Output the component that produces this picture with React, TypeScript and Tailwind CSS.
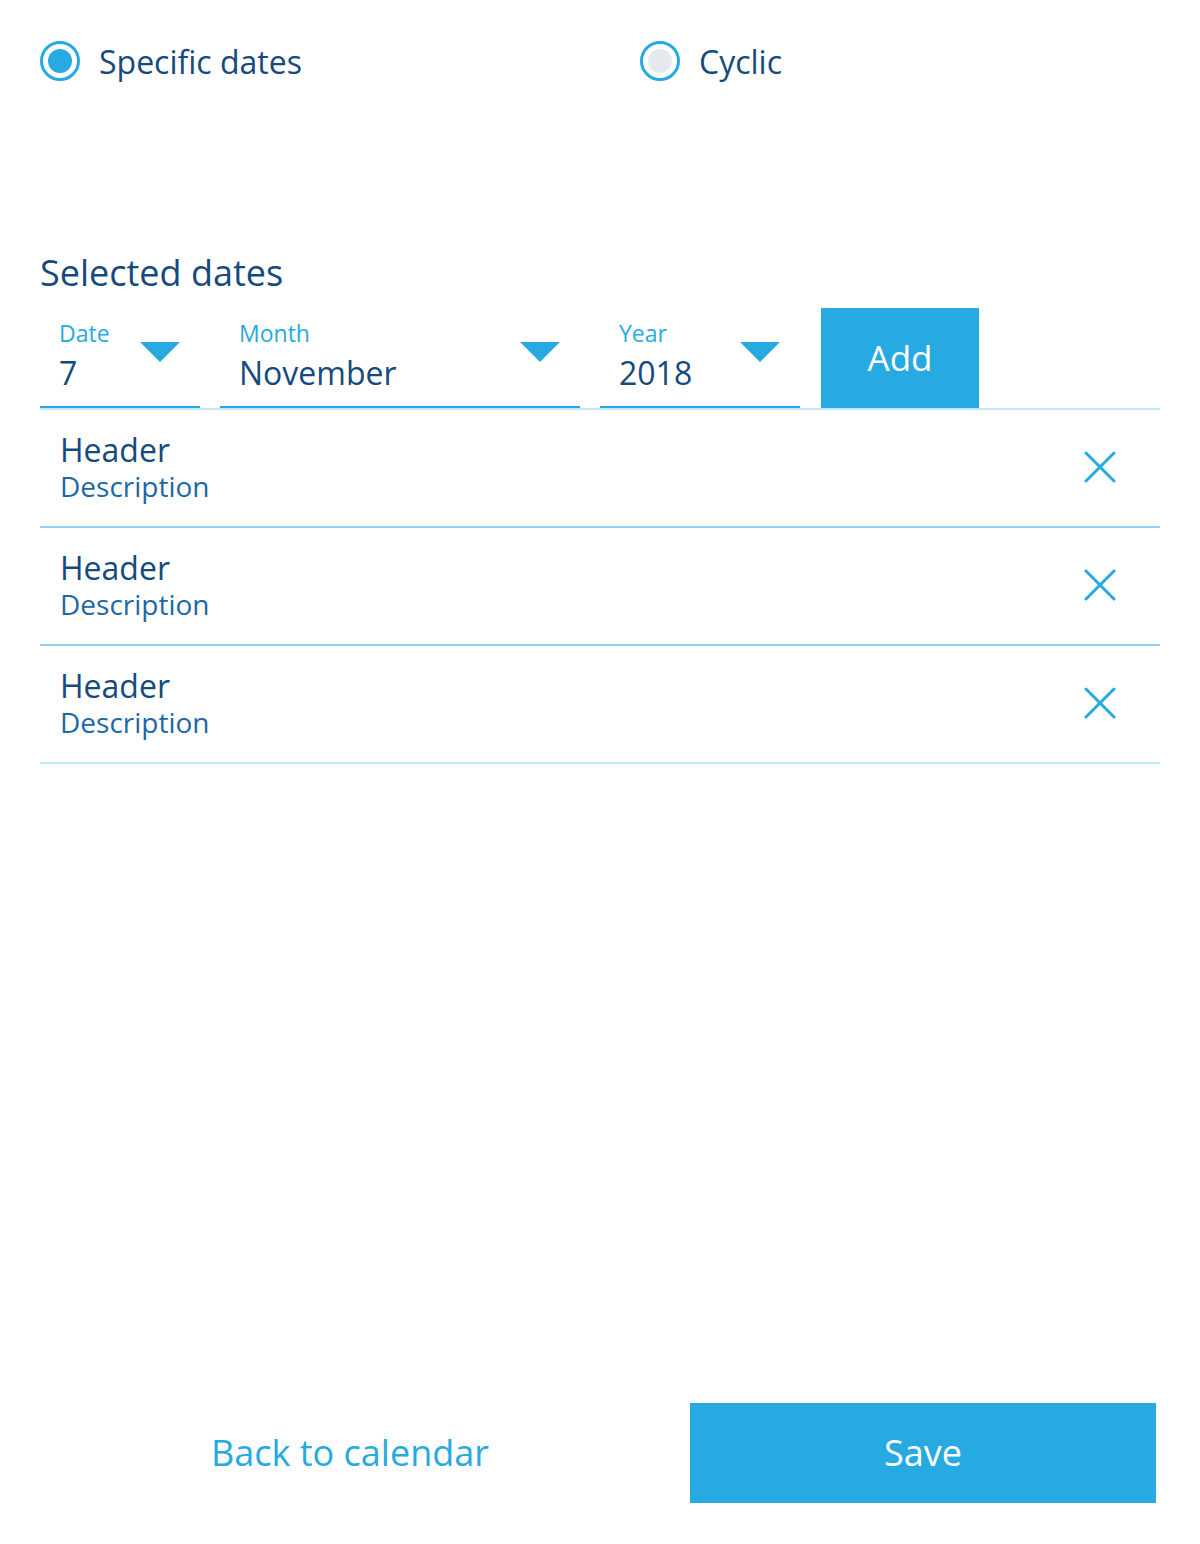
import { useState } from "react";

const font = { fontFamily: '"Open Sans", "Noto Sans", sans-serif' };

function Triangle() {
  return (
    <svg width="40" height="20" viewBox="0 0 40 20" className="shrink-0">
      <path d="M0 0 H40 L20 20 Z" fill="#27aae1" />
    </svg>
  );
}

function CloseIcon() {
  return (
    <svg width="32" height="32" viewBox="0 0 32 32" className="block">
      <path d="M2 2 L30 30 M30 2 L2 30" stroke="#27aae1" strokeWidth="3" strokeLinecap="round" />
    </svg>
  );
}

function Radio({ label, checked, onClick }: { label: string; checked: boolean; onClick: () => void }) {
  return (
    <button type="button" onClick={onClick} className="flex h-10 items-center gap-[19px]">
      <span className="flex h-10 w-10 items-center justify-center rounded-full border-[3px] border-[#27aae1] bg-white">
        <span className={checked ? "h-6 w-6 rounded-full bg-[#27aae1]" : "h-6 w-6 rounded-full bg-[#e4e9ee]"} />
      </span>
      <span className="pt-[2px] text-[32px] leading-10 text-[#154a7d]">{label}</span>
    </button>
  );
}

function Select({ label, value, width }: { label: string; value: string; width: string }) {
  return (
    <div className={`flex h-[100px] ${width} justify-between border-b-2 border-[#27aae1] pl-[19px] pr-5`}>
      <div className="flex flex-col pt-[10px]">
        <span className="text-[23px] leading-[30px] text-[#29aae1]">{label}</span>
        <span className="mt-[5px] text-[32px] leading-10 text-[#154a7d]">{value}</span>
      </div>
      <div className="pt-[34px]">
        <Triangle />
      </div>
    </div>
  );
}

export default function App() {
  const [mode, setMode] = useState<"specific" | "cyclic">("specific");
  const items = ["Header", "Header", "Header"];

  return (
    <div className="flex min-h-[1544px] flex-col bg-white" style={font}>
      <div className="px-10 pt-[41px]">
        <div className="flex">
          <div className="w-[600px]">
            <Radio label="Specific dates" checked={mode === "specific"} onClick={() => setMode("specific")} />
          </div>
          <Radio label="Cyclic" checked={mode === "cyclic"} onClick={() => setMode("cyclic")} />
        </div>

        <h2 className="mt-[170px] text-[36px] leading-[44px] text-[#154a7d]">Selected dates</h2>

        <div className="mt-[13px] border-b-2 border-[#bfe6f7]">
          <div className="flex items-end gap-5">
            <Select label="Date" value="7" width="w-[160px]" />
            <Select label="Month" value="November" width="w-[360px]" />
            <Select label="Year" value="2018" width="w-[200px]" />
            <button
              type="button"
              className="ml-px flex h-[100px] w-[158px] items-center justify-center bg-[#27aae1] text-[35px] text-white"
            >
              Add
            </button>
          </div>
        </div>

        <div>
          {items.map((h, i) => (
            <div
              key={i}
              className={
                i === items.length - 1
                  ? "flex items-center justify-between border-b-2 border-[#bfe6f7] pb-[23px] pl-5 pr-[44px] pt-[21px]"
                  : "flex items-center justify-between border-b-2 border-[#8fd3f0] pb-[23px] pl-5 pr-[44px] pt-[21px]"
              }
            >
              <div className="flex flex-col">
                <span className="text-[32px] leading-[38px] text-[#154a7d]">{h}</span>
                <span className="text-[28px] leading-[34px] text-[#2167a6]">Description</span>
              </div>
              <button type="button" className="flex">
                <CloseIcon />
              </button>
            </div>
          ))}
        </div>
      </div>

      <div className="flex-1" />

      <div className="flex items-center pb-[41px] pl-10 pr-[44px]">
        <div className="mr-[30px] flex flex-1 justify-center">
          <button type="button" className="text-[36px] text-[#27aae1]">
            Back to calendar
          </button>
        </div>
        <button type="button" className="h-[100px] w-[466px] bg-[#27aae1] text-[36px] text-white">
          Save
        </button>
      </div>
    </div>
  );
}
